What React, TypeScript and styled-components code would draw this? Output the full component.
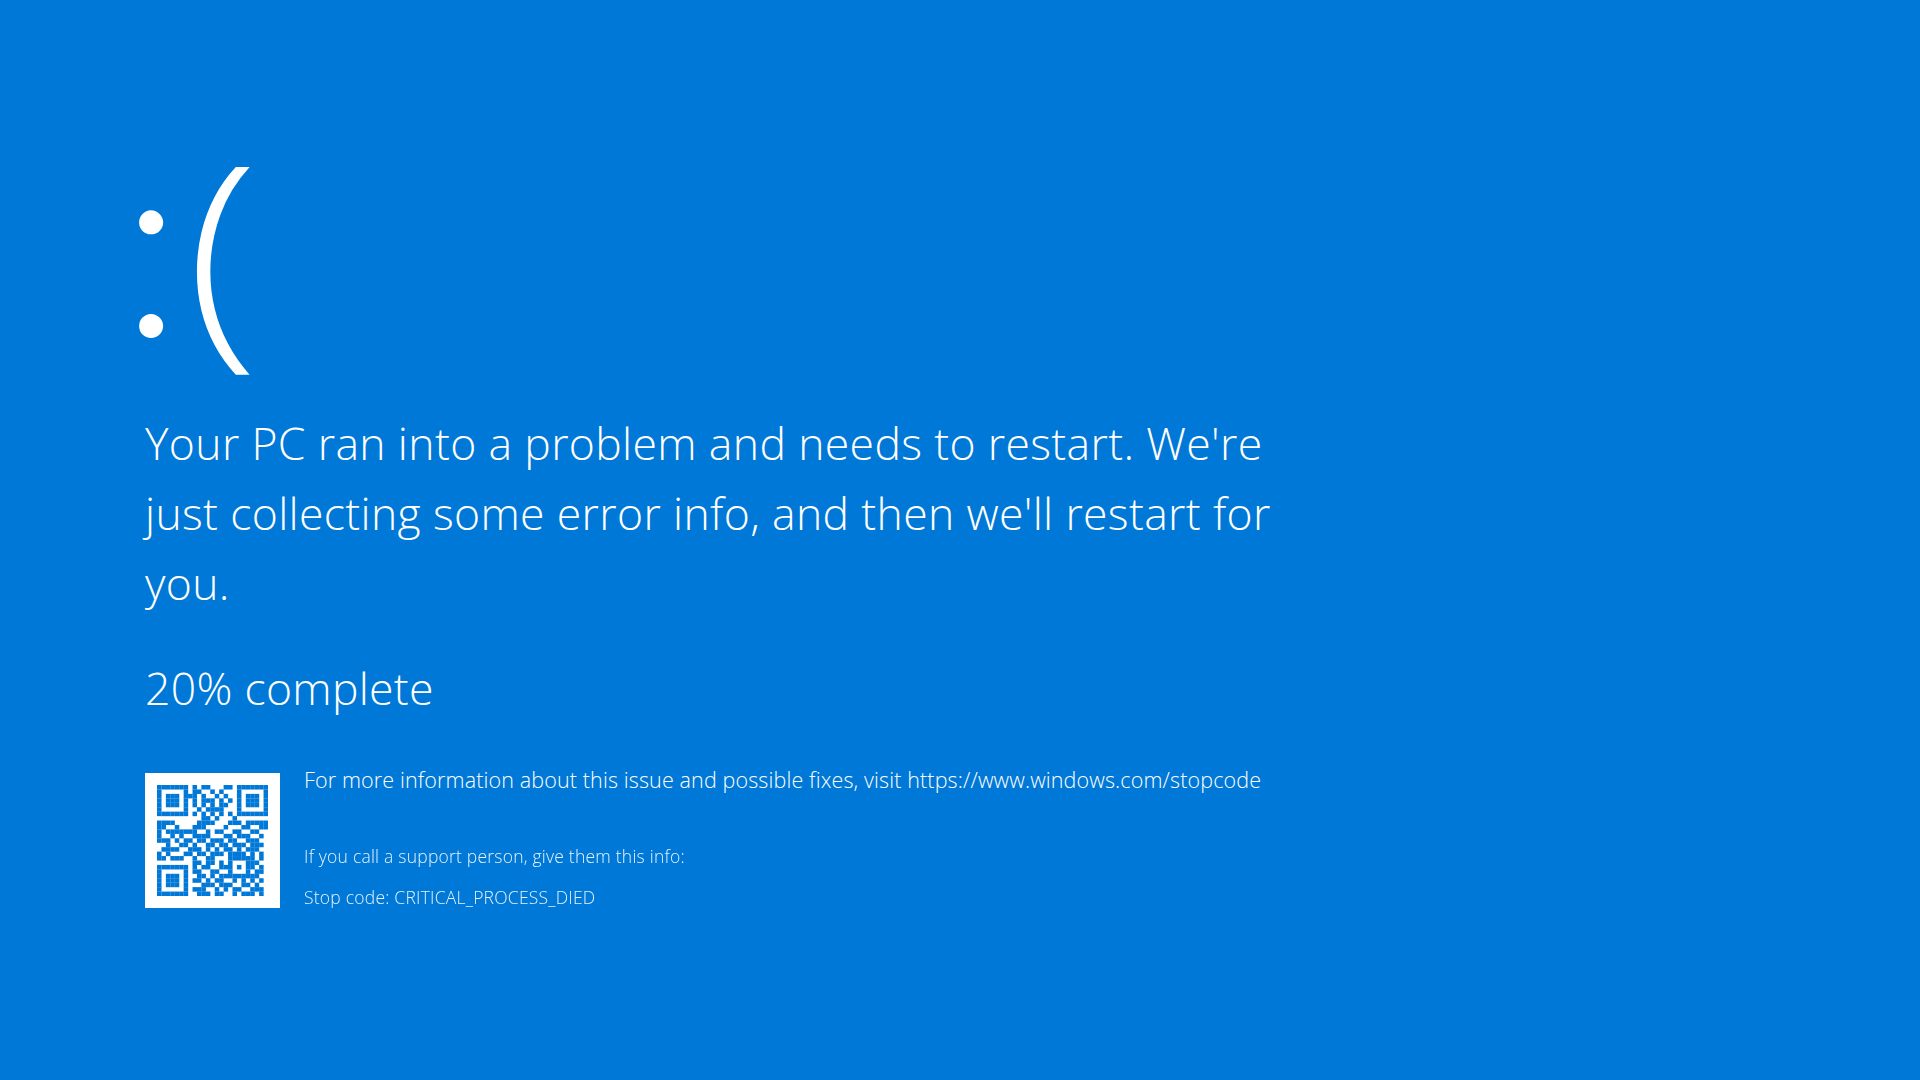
import React from 'react'
import styled, { createGlobalStyle } from 'styled-components'

const GlobalStyle = createGlobalStyle`
  html, body {
    margin: 0;
    padding: 0;
    height: 100%;
    background: #0078d7;
  }
`

const Screen = styled.div`
  width: 1920px;
  height: 1080px;
  box-sizing: border-box;
  padding: 126px 0 0 145px;
  overflow: hidden;
  background: #0078d7;
  color: #fff;
  font-family: "Open Sans", "Liberation Sans", sans-serif;
  font-weight: 300;
`

const Face = styled.div`
  display: flex;
  align-items: center;
  height: 240px;
  margin: 0 0 42px -21px;
  line-height: 240px;
  font-size: 238px;
  font-weight: 300;
`

const Eyes = styled.span`
  width: 66px;
  margin: -22px 0 0 -4px;
  box-sizing: border-box;
  font-family: Lato, "Open Sans", sans-serif;
  font-size: 260px;
  font-weight: 300;
`

const Mouth = styled.span`
  display: inline-block;
  margin-top: -3px;
  transform: scaleX(1.12);
  transform-origin: left center;
`

const Message = styled.div`
  width: 1160px;
  font-size: 44.5px;
  line-height: 70px;
  letter-spacing: 0.35px;
`

const Progress = styled.div`
  margin-top: 35px;
  font-size: 44.5px;
  line-height: 70px;
  letter-spacing: 0.3px;
`

const Footer = styled.div`
  display: flex;
  align-items: flex-start;
  gap: 24px;
  margin-top: 50px;
`

const QrBox = styled.div`
  width: 135px;
  height: 135px;
  background: #fff;
  padding: 12px;
  box-sizing: border-box;
  flex: none;

  svg {
    display: block;
    width: 111px;
    height: 111px;
    filter: blur(0.4px);
  }
`

const Details = styled.div`
  display: flex;
  flex-direction: column;
`

const MoreInfo = styled.div`
  font-size: 21.5px;
  line-height: 14px;
  letter-spacing: 0.13px;
  white-space: nowrap;
`

const SupportLine = styled.div<{ $top: number }>`
  margin-top: ${({ $top }) => $top}px;
  font-size: 17.5px;
  line-height: 24px;
  letter-spacing: 0.22px;
  white-space: nowrap;
  opacity: 0.9;
`

const QR_ROWS = [
  '1111111010110001101111111',
  '1000001011001010001000001',
  '1011101110100101001011101',
  '1011101010111010101011101',
  '1011101010101011001011101',
  '1000001001011110001000001',
  '1111111010101010101111111',
  '0000000000110100010000000',
  '1111000001111000111011111',
  '1100100011100001000110011',
  '1011111110010110011001100',
  '1001010011110001101110010',
  '1110101101101110110011100',
  '0010011010011011011101110',
  '0111100111010101101011100',
  '1010001101101110111101010',
  '1101110010011000111111010',
  '0000000011011010100011100',
  '1111111010110011101011010',
  '1000001011001100100010110',
  '1011101001101011111111100',
  '1011101011010110010101010',
  '1011101000111011100110100',
  '1000001011100101011001110',
  '1111111001110110010111010'
]

function QrCode() {
  return (
    <svg viewBox="0 0 25 25">
      {QR_ROWS.map((row, y) =>
        row.split('').map((cell, x) =>
          cell === '1' ? <rect key={x + '-' + y} x={x} y={y} width={1.02} height={1.02} fill="#0078d7" /> : null
        )
      )}
    </svg>
  )
}

export default function App() {
  return (
    <>
      <GlobalStyle />
      <Screen>
        <Face>
          <Eyes>:</Eyes>
          <Mouth>(</Mouth>
        </Face>
        <Message>
          Your PC ran into a problem and needs to restart. We're just collecting some error info, and then we'll restart for you.
        </Message>
        <Progress>20% complete</Progress>
        <Footer>
          <QrBox>
            <QrCode />
          </QrBox>
          <Details>
            <MoreInfo>For more information about this issue and possible fixes, visit https://www.windows.com/stopcode</MoreInfo>
            <SupportLine $top={57}>If you call a support person, give them this info:</SupportLine>
            <SupportLine $top={17}>Stop code: CRITICAL_PROCESS_DIED</SupportLine>
          </Details>
        </Footer>
      </Screen>
    </>
  )
}
